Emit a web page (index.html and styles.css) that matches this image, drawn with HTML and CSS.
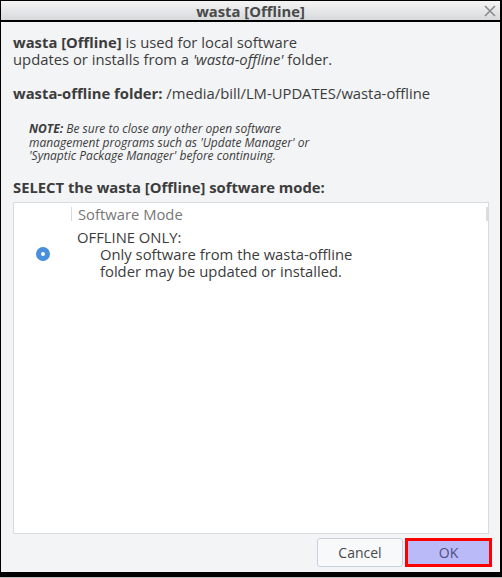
FILE: index.html
```html
<!DOCTYPE html>
<html>
<head>
<meta charset="utf-8">
<link rel="stylesheet" href="styles.css">
</head>
<body>
<div class="window">
  <div class="titlebar">
    <span class="title">wasta [Offline]</span>
    <svg class="close" width="12" height="12" viewBox="0 0 12 12"><path d="M1 1 L11 11 M11 1 L1 11" stroke="#8a8a8a" stroke-width="1.6" fill="none"/></svg>
  </div>
  <div class="content">
    <p class="intro"><b>wasta [Offline]</b> is used for local software<br>updates or installs from a <i>'wasta-offline'</i> folder.</p>
    <p class="folder"><b>wasta-offline folder:</b> /media/bill/LM-UPDATES/wasta-offline</p>
    <div class="note">
      <span class="nl"><b>NOTE:</b> Be sure to close any other open software</span>
      <span class="nl">management programs such as 'Update Manager' or</span>
      <span class="nl">'Synaptic Package Manager' before continuing.</span>
    </div>
    <p class="select">SELECT the wasta [Offline] software mode:</p>
    <div class="listbox">
      <div class="header">
        <div class="hcell-empty"></div>
        <div class="hcell">Software Mode</div>
        <div class="hend"></div>
      </div>
      <div class="row">
        <div class="radiocell"><span class="radio"></span></div>
        <div class="rowtext">OFFLINE ONLY:<br><span class="indent">Only software from the wasta-offline<br>folder may be updated or installed.</span></div>
      </div>
    </div>
    <div class="buttons">
      <button class="btn cancel">Cancel</button>
      <button class="btn ok">OK</button>
    </div>
  </div>
</div>
</body>
</html>
```
FILE: styles.css
```css
* { box-sizing: border-box; }
html, body { margin: 0; padding: 0; }
body {
  width: 502px;
  height: 578px;
  background: #bdbdbd;
  font-family: "Open Sans", "DejaVu Sans", sans-serif;
  color: #3c3c3c;
  overflow: hidden;
}
.window {
  width: 502px;
  height: 577px;
  border-left: 1px solid #000;
  border-right: 2px solid #000;
  border-top: 1px solid #000;
  border-bottom: 5px solid #000;
  display: flex;
  flex-direction: column;
  background: #f3f4f6;
}
.titlebar {
  height: 21px;
  flex: none;
  background: linear-gradient(#f5f5f5, #d7d9dc);
  border-bottom: 2px solid #000;
  display: flex;
  align-items: center;
  justify-content: center;
  position: relative;
}
.title {
  font-weight: bold;
  font-size: 14.8px;
  color: #4a4a4a;
  line-height: 18px;
}
.close {
  position: absolute;
  right: 4px;
  top: 4px;
}
.content {
  flex: 1;
  padding: 12px 8px 6px 12px;
  display: flex;
  flex-direction: column;
}
p { margin: 0; }
.intro {
  font-size: 14.8px;
  line-height: 17px;
}
.folder {
  font-size: 14.8px;
  line-height: 17px;
  margin-top: 17px;
}
.note {
  font-size: 12px;
  font-style: italic;
  margin-top: 20px;
  padding-left: 16px;
  display: flex;
  flex-direction: column;
}
.nl {
  display: block;
  height: 13.5px;
  line-height: 13.5px;
}
.select {
  font-size: 14.8px;
  font-weight: bold;
  line-height: 17px;
  margin-top: 16px;
}
.listbox {
  margin-top: 6px;
  height: 332px;
  background: #fff;
  border: 1px solid #d9dadc;
  width: 476px;
}
.header {
  display: flex;
  height: 22px;
  align-items: center;
}
.hcell-empty { width: 57px; flex: none; }
.hcell {
  flex: 1;
  border-left: 1px solid #d9dadc;
  padding-left: 6px;
  font-size: 14.8px;
  color: #777;
  line-height: 14px;
}
.hend {
  width: 2px;
  height: 14px;
  background: #dcdcdc;
}
.row {
  display: flex;
  align-items: center;
  padding-top: 4px;
}
.radiocell {
  width: 63px;
  flex: none;
  display: flex;
  justify-content: flex-start;
  padding-left: 22px;
}
.radio {
  width: 14px;
  height: 14px;
  border-radius: 50%;
  background: #4a8fdc;
  display: flex;
  align-items: center;
  justify-content: center;
}
.radio::after {
  content: "";
  width: 4px;
  height: 4px;
  border-radius: 50%;
  background: #fff;
}
.rowtext {
  font-size: 14.8px;
  line-height: 17px;
  color: #3c3c3c;
}
.indent { display: inline-block; padding-left: 23px; }
.buttons {
  display: flex;
  justify-content: flex-end;
  gap: 2px;
  margin-top: 4px;
}
.btn {
  font-family: inherit;
  font-size: 14px;
  height: 29px;
  color: #4a4a4a;
}
.cancel {
  width: 86px;
  background: #f8f9fb;
  border: 1px solid #c9d0db;
  border-radius: 3px;
}
.ok {
  width: 87px;
  background: #babaf8;
  border: 3px solid #ff0000;
  border-radius: 0;
  color: #4e4e7e;
}
```
